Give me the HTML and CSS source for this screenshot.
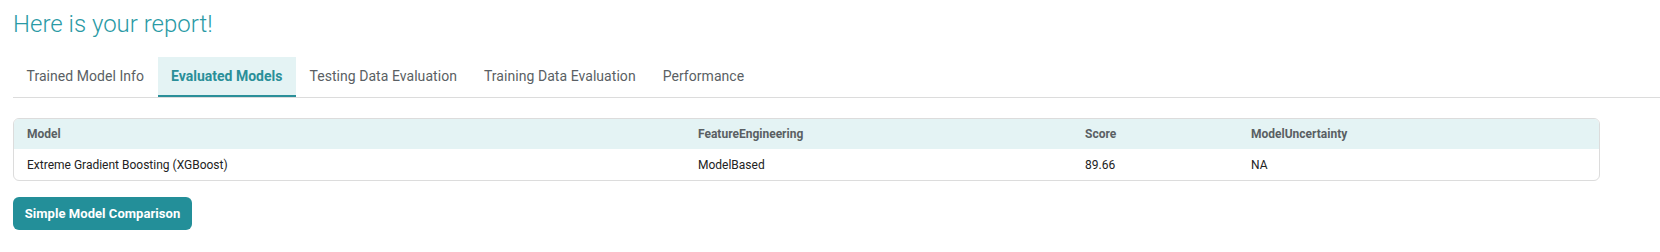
FILE: index.html
```html
<!DOCTYPE html>
<html>
<head>
<meta charset="utf-8">
<link rel="stylesheet" href="styles.css">
</head>
<body>
<div class="page">
  <h1 class="title">Here is your report!</h1>
  <nav class="tabs">
    <div class="tab">Trained Model Info</div>
    <div class="tab active">Evaluated Models</div>
    <div class="tab">Testing Data Evaluation</div>
    <div class="tab">Training Data Evaluation</div>
    <div class="tab">Performance</div>
  </nav>
  <div class="table-wrap">
    <table class="grid">
      <colgroup>
        <col class="c1"><col class="c2"><col class="c3"><col class="c4">
      </colgroup>
      <thead>
        <tr><th>Model</th><th>FeatureEngineering</th><th>Score</th><th>ModelUncertainty</th></tr>
      </thead>
      <tbody>
        <tr><td>Extreme Gradient Boosting (XGBoost)</td><td>ModelBased</td><td>89.66</td><td>NA</td></tr>
      </tbody>
    </table>
  </div>
  <button class="btn">Simple Model Comparison</button>
</div>
</body>
</html>
```
FILE: styles.css
```css
html, body {
  margin: 0;
  padding: 0;
  background: #fff;
}
.page {
  font-family: Roboto, "Liberation Sans", sans-serif;
  padding: 10px 0 0 13px;
}
.title {
  margin: 0;
  font-size: 24px;
  line-height: 28px;
  font-weight: 300;
  color: #2a9aa5;
}
.tabs {
  display: flex;
  margin-top: 19px;
  border-bottom: 1px solid #dcdcdc;
}
.tab {
  height: 38px;
  line-height: 39px;
  padding: 0 13.5px;
  font-size: 14px;
  letter-spacing: 0.05px;
  color: #5a5f64;
  border-bottom: 2px solid transparent;
}
.tab.active {
  background: #e4f3f4;
  color: #2a8f99;
  font-weight: 700;
  letter-spacing: 0;
  border-bottom-color: #2a8f99;
}
.table-wrap {
  margin-top: 20px;
  width: 1585px;
  border: 1px solid #dcdcdc;
  border-radius: 6px;
  overflow: hidden;
}
.grid {
  width: 100%;
  border-collapse: collapse;
  table-layout: fixed;
  font-size: 12px;
}
.c1 { width: 671px; }
.c2 { width: 387px; }
.c3 { width: 166px; }
.grid th {
  background: #e4f3f4;
  color: #5a5f63;
  font-weight: 700;
  text-align: left;
  height: 30px;
  padding: 0 13px;
}
.grid td {
  color: #222;
  height: 30px;
  padding: 0 13px;
  border-top: 1px solid #fff;
}
.btn {
  margin-top: 16px;
  display: block;
  height: 33px;
  width: 179px;
  padding: 0;
  border: none;
  border-radius: 6px;
  background: #238f99;
  color: #fff;
  font-family: Roboto, "Liberation Sans", sans-serif;
  font-weight: 700;
  font-size: 13px;
  letter-spacing: 0.05px;
}
```
